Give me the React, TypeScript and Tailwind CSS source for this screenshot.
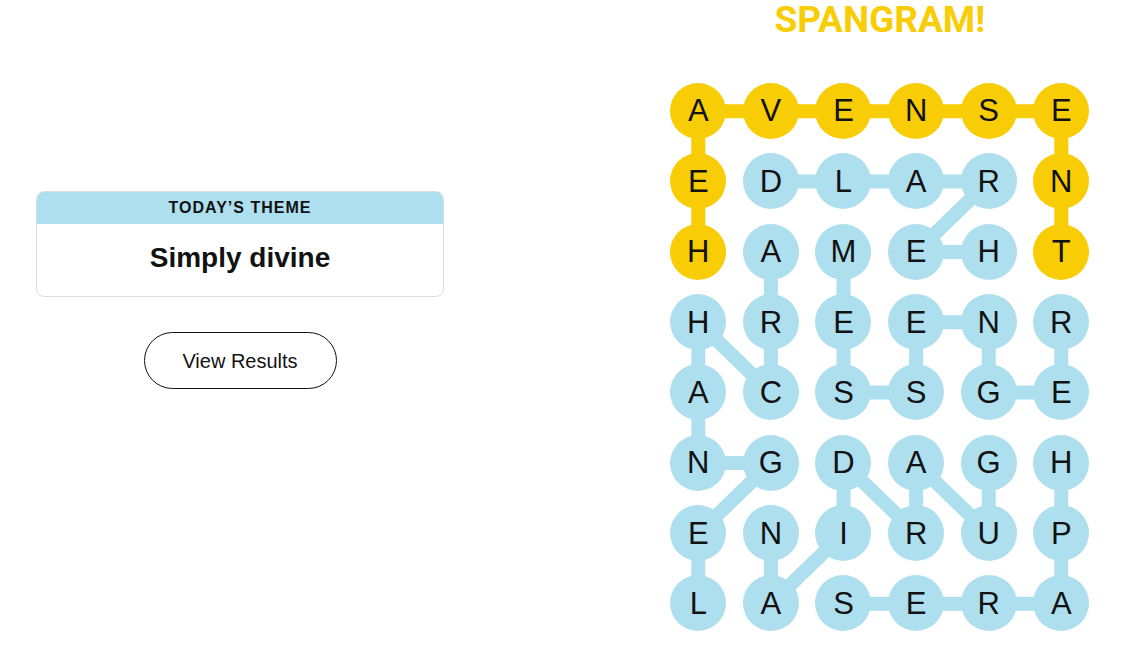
import React from 'react';

const GRID = [
  'AVENSE',
  'EDLARN',
  'HAMEHT',
  'HREENR',
  'ACSSGE',
  'NGDAGH',
  'ENIRUP',
  'LASERA',
];

const COL = 72.6;
const ROW = 70.36;

type Cell = [number, number];

// spangram cells are yellow, everything else found is blue
const SPANGRAM: Cell[] = [
  [2, 0], [1, 0], [0, 0], [0, 1], [0, 2], [0, 3], [0, 4], [0, 5], [1, 5], [2, 5],
];

const WORDS: Cell[][] = [
  [[2, 4], [2, 3], [1, 4], [1, 3], [1, 2], [1, 1]],
  [[2, 1], [3, 1], [4, 1], [3, 0], [4, 0], [5, 0], [5, 1], [6, 0], [7, 0]],
  [[2, 2], [3, 2], [4, 2], [4, 3], [3, 3], [3, 4], [4, 4], [4, 5], [3, 5]],
  [[5, 4], [6, 4], [5, 3], [6, 3], [5, 2], [6, 2], [7, 1], [6, 1]],
  [[7, 2], [7, 3], [7, 4], [7, 5], [6, 5], [5, 5]],
];

const cx = (c: number) => COL / 2 + c * COL;
const cy = (r: number) => ROW / 2 + r * ROW;

function Path({ cells, color }: { cells: Cell[]; color: string }) {
  return (
    <polyline
      points={cells.map(([r, c]) => `${cx(c)},${cy(r)}`).join(' ')}
      fill="none"
      stroke={color}
      strokeWidth={14}
      strokeLinejoin="miter"
    />
  );
}

function Board() {
  const isSpan = (r: number, c: number) => SPANGRAM.some(([a, b]) => a === r && b === c);

  return (
    <div className="relative w-[435.6px] h-[562.9px]">
      <svg className="absolute inset-0" width={6 * COL} height={8 * ROW}>
        {WORDS.map((w, i) => (
          <Path key={i} cells={w} color="#aedfee" />
        ))}
        <Path cells={SPANGRAM} color="#f8cd05" />
      </svg>
      <div className="relative grid grid-cols-[repeat(6,72.6px)] grid-rows-[repeat(8,70.36px)]">
        {GRID.map((row, r) =>
          row.split('').map((ch, c) => (
            <div key={`${r}-${c}`} className="flex items-center justify-center">
              <div
                className={`w-[56px] h-[56px] rounded-full flex items-center justify-center text-[31px] leading-none text-[#121212] ${
                  isSpan(r, c) ? 'bg-[#f8cd05]' : 'bg-[#aedfee]'
                }`}
              >
                {ch}
              </div>
            </div>
          ))
        )}
      </div>
    </div>
  );
}

export default function App() {
  return (
    <main
      className="w-[1142px] h-[661px] bg-white flex overflow-hidden text-[#121212]"
      style={{ fontFamily: '"Liberation Sans", Arial, sans-serif' }}
    >
      <section className="w-[480px] flex flex-col items-center pt-[191px]">
        <div className="w-[408px] h-[106px] rounded-lg border border-[#dcdcdc] overflow-hidden flex flex-col">
          <div className="h-[32px] bg-[#aedfee] flex items-center justify-center text-[16px] font-bold tracking-[1px] uppercase">
            Today’s Theme
          </div>
          <div className="flex-1 flex items-center justify-center pb-[4px] text-[28px] font-bold">
            Simply divine
          </div>
        </div>
        <button className="mt-[35px] w-[193px] h-[57px] rounded-full border border-[#121212] text-[20px] bg-white">
          View Results
        </button>
      </section>

      <section className="ml-[182px] flex flex-col items-center">
        <h2
          className="text-[37px] leading-[40px] font-bold text-[#f8cd05]"
          style={{ fontFamily: 'Roboto, "Liberation Sans", sans-serif' }}
        >
          SPANGRAM!
        </h2>
        <div className="mt-[35.8px]">
          <Board />
        </div>
      </section>
    </main>
  );
}
